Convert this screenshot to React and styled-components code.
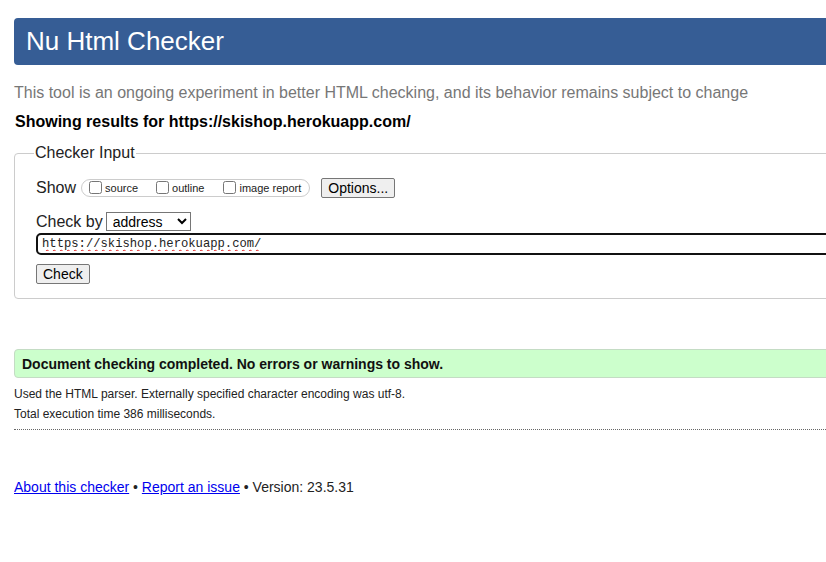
import React from 'react';
import styled, { createGlobalStyle } from 'styled-components';

const Global = createGlobalStyle`
  html, body {
    margin: 0;
    overflow: hidden;
    background: #fff;
  }
  body {
    font-family: "Liberation Sans", Arial, sans-serif;
    color: #000;
  }
`;

const Page = styled.div`
  width: 1000px;
  padding: 18px 0 40px 14px;
`;

const Title = styled.h1`
  margin: 0;
  height: 47px;
  display: flex;
  align-items: center;
  padding: 0 12px;
  background: #365d95;
  color: #fff;
  border-radius: 4px;
  font-size: 26px;
  font-weight: normal;
`;

const Intro = styled.p`
  margin: 19px 0 0;
  font-size: 16px;
  line-height: 18px;
  color: #777;
`;

const Heading = styled.h2`
  margin: 11px 0 0 1px;
  font-size: 16px;
  line-height: 18px;
  font-weight: bold;
  color: #000;
`;

const Form = styled.fieldset`
  margin: 13px 0 0;
  padding: 16px 20px 14px 21px;
  border: 1px solid #ccc;
  border-radius: 4px;
`;

const Legend = styled.legend`
  margin-left: -2px;
  padding: 0 1px;
  font-size: 16px;
  line-height: 18px;
  color: #222;
`;

const Row = styled.div`
  display: flex;
  align-items: center;
  gap: ${p => p.$gap || 0}px;
  margin-top: ${p => p.$top || 0}px;
  font-size: 16px;
  color: #222;
`;

const Options = styled.div`
  display: flex;
  align-items: center;
  height: 16px;
  padding: 0 8px 0 3px;
  border: 1px solid #ccc;
  border-radius: 9px;
`;

const Toggle = styled.label`
  display: flex;
  align-items: center;
  margin-right: ${p => p.$space || 0}px;
  font-size: 11px;
  color: #222;

  input {
    width: 13px;
    height: 13px;
    margin: 0 3px 1px 4px;
  }
`;

const Button = styled.button`
  font-family: "Liberation Sans", Arial, sans-serif;
  font-size: 14px;
  height: 20px;
  margin-left: ${p => p.$left || 0}px;
  padding: 0 6px;
  color: #000;
  background: #efefef;
  border: 1px solid #767676;
  border-radius: 2px;
`;

const Select = styled.select`
  font-family: "Liberation Sans", Arial, sans-serif;
  font-size: 14px;
  width: 85px;
  height: 19px;
  padding: 0 0 0 2px;
  border: 1px solid #767676;
  border-radius: 0;
  color: #000;
  background: #fff;
`;

const Address = styled.input`
  box-sizing: border-box;
  width: 1000px;
  height: 22px;
  padding: 0 4px;
  font-family: "Liberation Mono", "DejaVu Sans Mono", monospace;
  font-size: 12.2px;
  color: #222;
  border: 2px solid #111;
  border-radius: 5px;
  outline: none;
  text-decoration: underline wavy #e02020;
  text-decoration-thickness: 1px;
  text-underline-offset: 2px;
`;

const Result = styled.div`
  margin-top: 50px;
  height: 27px;
  display: flex;
  align-items: center;
  padding: 0 7px;
  background: #ccffcc;
  border: 1px solid #c4dcc4;
  border-radius: 4px;
  font-size: 14px;
  font-weight: bold;
  color: #111;
`;

const Note = styled.p`
  margin: ${p => p.$top || 0}px 0 0;
  font-size: 12px;
  line-height: 14px;
  color: #222;
`;

const Rule = styled.hr`
  margin: 8px 0 0;
  border: 0;
  border-top: 1px dotted #666;
`;

const Footer = styled.p`
  margin: 49px 0 0;
  font-size: 14px;
  line-height: 16px;
  color: #222;

  a {
    color: #0000ee;
  }
`;

export default function App() {
  return (
    <Page>
      <Global />
      <Title>Nu Html Checker</Title>
      <Intro>
        This tool is an ongoing experiment in better HTML checking, and its behavior remains subject to change
      </Intro>
      <Heading>Showing results for https://skishop.herokuapp.com/</Heading>

      <Form>
        <Legend>Checker Input</Legend>
        <Row $gap={5}>
          Show
          <Options>
            <Toggle $space={14}>
              <input type="checkbox" />source
            </Toggle>
            <Toggle $space={15}>
              <input type="checkbox" />outline
            </Toggle>
            <Toggle>
              <input type="checkbox" />image report
            </Toggle>
          </Options>
          <Button type="button" $left={6}>Options...</Button>
        </Row>
        <Row $gap={3} $top={14}>
          Check by
          <Select defaultValue="address">
            <option value="address">address</option>
            <option value="file">file upload</option>
            <option value="text">text input</option>
          </Select>
        </Row>
        <Row $top={2}>
          <Address type="url" defaultValue="https://skishop.herokuapp.com/" spellCheck />
        </Row>
        <Row $top={9}>
          <Button type="button">Check</Button>
        </Row>
      </Form>

      <Result>Document checking completed. No errors or warnings to show.</Result>
      <Note $top={9}>Used the HTML parser. Externally specified character encoding was utf-8.</Note>
      <Note $top={6}>Total execution time 386 milliseconds.</Note>
      <Rule />
      <Footer>
        <a href="#about">About this checker</a> • <a href="#report">Report an issue</a> • Version: 23.5.31
      </Footer>
    </Page>
  );
}
